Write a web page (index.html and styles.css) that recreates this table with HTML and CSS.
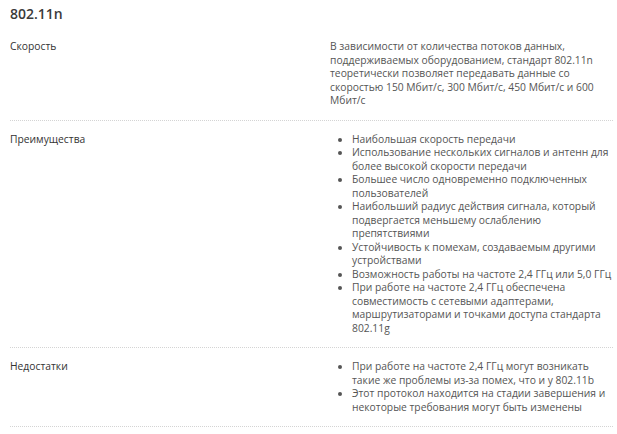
FILE: index.html
```html
<!DOCTYPE html>
<html lang="ru">
<head>
<meta charset="utf-8">
<link rel="stylesheet" href="styles.css">
</head>
<body>
<div class="page">
  <h2 class="title">802.11n</h2>
  <div class="row">
    <div class="label">Скорость</div>
    <div class="value">В зависимости от количества потоков данных, поддерживаемых оборудованием, стандарт 802.11n теоретически позволяет передавать данные со скоростью 150 Мбит/с, 300 Мбит/с, 450 Мбит/с и 600 Мбит/с</div>
  </div>
  <div class="row">
    <div class="label">Преимущества</div>
    <div class="value">
      <ul class="list">
        <li>Наибольшая скорость передачи</li>
        <li>Использование нескольких сигналов и антенн для более высокой скорости передачи</li>
        <li>Большее число одновременно подключенных пользователей</li>
        <li>Наибольший радиус действия сигнала, который подвергается меньшему ослаблению препятствиями</li>
        <li>Устойчивость к помехам, создаваемым другими устройствами</li>
        <li>Возможность работы на частоте 2,4 ГГц или 5,0 ГГц</li>
        <li>При работе на частоте 2,4 ГГц обеспечена совместимость с сетевыми адаптерами, маршрутизаторами и точками доступа стандарта 802.11g</li>
      </ul>
    </div>
  </div>
  <div class="row">
    <div class="label">Недостатки</div>
    <div class="value">
      <ul class="list">
        <li>При работе на частоте 2,4 ГГц могут возникать такие же проблемы из-за помех, что и у 802.11b</li>
        <li>Этот протокол находится на стадии завершения и некоторые требования могут быть изменены</li>
      </ul>
    </div>
  </div>
</div>
</body>
</html>
```

FILE: styles.css
```css
html, body {
  margin: 0;
  padding: 0;
  background: #ffffff;
}
body {
  font-family: "Open Sans", "Noto Sans", sans-serif;
  font-size: 10.3px;
  line-height: 13.5px;
  color: #555555;
}
.page {
  padding: 0 4px 0 10px;
}
.title {
  margin: 0;
  padding-top: 5px;
  height: 23px;
  font-size: 14px;
  line-height: 18px;
  font-weight: 600;
  color: #3a3a3a;
}
.row {
  display: grid;
  grid-template-columns: 320px 1fr;
  padding: 12px 0 12px 0;
  border-bottom: 1px dotted #d4d4d4;
}
.label {
  color: #333333;
}
.value {
  margin-right: -4px;
}
.list {
  margin: 0;
  padding: 0 0 0 22px;
}
.list li {
  margin: 0;
}
```
